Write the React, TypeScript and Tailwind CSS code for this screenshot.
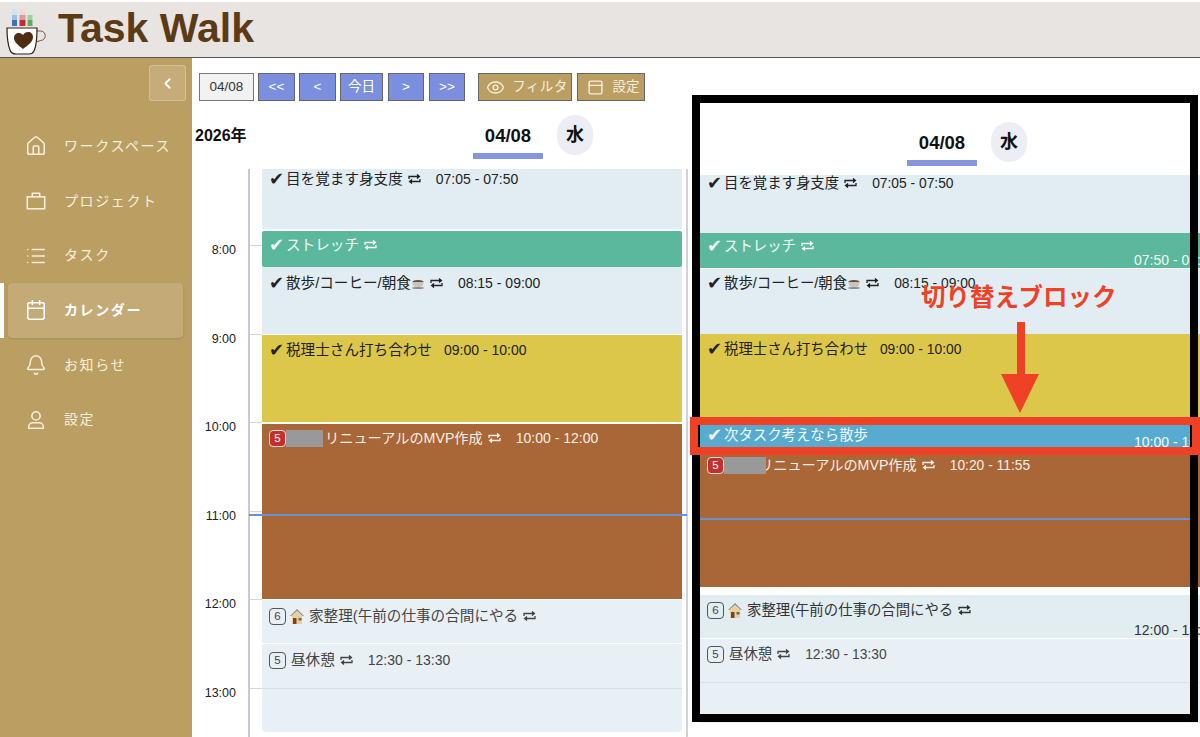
import { Bell, Calendar, ChevronLeft, Eye, House, List, PanelTop } from "lucide-react";
import type { ReactNode } from "react";

const Logo = () => (
  <svg width="50" height="55" viewBox="0 0 50 55" className="shrink-0">
    <rect x="12" y="7" width="5" height="6" fill="#cfe3f2" />
    <rect x="12" y="13" width="5" height="5" fill="#9dbfe0" />
    <rect x="12" y="18" width="5" height="6" fill="#3d72b8" />
    <rect x="19.5" y="7" width="6" height="6" fill="#f2d9d9" />
    <rect x="19.5" y="13" width="6" height="5" fill="#d99a9a" />
    <rect x="19.5" y="18" width="6" height="6" fill="#b92f35" />
    <rect x="27.5" y="7" width="5" height="6" fill="#d9eeda" />
    <rect x="27.5" y="13" width="5" height="5" fill="#a2d0a4" />
    <rect x="27.5" y="18" width="5" height="6" fill="#5cae5e" />
    <path d="M37 29h3.5a4.5 4.5 0 0 1 0 9.5L36 40" fill="none" stroke="#6b5a44" strokeWidth="1" />
    <path d="M7 26h30c0 10-1 19-3 23-1 2-3 3-5 3H16c-3 0-5-1-6-4C8 43 7 35 7 26z" fill="#fff" stroke="#2a2018" strokeWidth="1.2" />
    <path d="M23 47c-5-4-9-7-9-11 0-3 2-5 5-5 2 0 3 1 4 2 1-2 3-3 5-3 3 0 5 2 5 5 0 5-5 8-10 12z" fill="#4d2c12" />
  </svg>
);

const Repeat = () => (
  <svg width="13" height="10" viewBox="0 0 13 10" fill="none" stroke="currentColor" strokeWidth="1.3" className="shrink-0">
    <path d="M1 5V2.5h9" />
    <path d="M9 .6l2.4 1.9L9 4.400" fill="currentColor" />
    <path d="M12 5v2.500H3" />
    <path d="M4 5.600L1.600 7.500 4 9.400" fill="currentColor" />
  </svg>
);

const Cup = () => (
  <svg width="14" height="14" viewBox="0 0 14 14" className="shrink-0">
    <ellipse cx="7" cy="6" rx="5.5" ry="2" fill="#6b4a30" />
    <path d="M1.500 6c0 3 1.500 5 3.500 5h4c2 0 3.500-2 3.500-5z" fill="#c9c4be" />
    <ellipse cx="7" cy="12" rx="6" ry="1" fill="#8f8a85" />
  </svg>
);

const Home = () => (
  <svg width="14" height="17" viewBox="0 0 14 17" className="shrink-0">
    <path d="M7 1L0 8h1.500L7 3l5.500 5H14z" fill="#8a8f94" />
    <path d="M2 8l5-4.500L12 8v8H2z" fill="#f0cf97" />
    <rect x="3" y="10" width="3.500" height="6" fill="#6b4a2c" />
    <rect x="8.500" y="10" width="3" height="2.500" fill="#5a6b78" />
  </svg>
);

const CaseIcon = () => (
  <svg width="22" height="22" viewBox="0 0 24 24" fill="none" stroke="currentColor" strokeWidth="1.700" className="shrink-0">
    <rect x="2.500" y="7.500" width="19" height="13" />
    <path d="M8 7.500V3.500h8v4" />
  </svg>
);

const PersonIcon = () => (
  <svg width="22" height="22" viewBox="0 0 24 24" fill="none" stroke="currentColor" strokeWidth="1.700" className="shrink-0">
    <circle cx="12" cy="7.500" r="4.500" />
    <path d="M4 21v-1.500A4.500 4.500 0 0 1 8.500 15h7a4.500 4.500 0 0 1 4.500 4.500V21z" />
  </svg>
);

const Badge = ({ n, red }: { n: number; red?: boolean }) =>
  red ? (
    <span className="flex h-[17px] w-[17px] shrink-0 items-center justify-center rounded-[4px] border border-[#f3d9d0] bg-[#c5302f] text-[11.500px] text-white">
      {n}
    </span>
  ) : (
    <span className="flex h-[17px] w-[17px] shrink-0 items-center justify-center rounded-[4px] border border-[#555] text-[11.500px] text-[#444]">
      {n}
    </span>
  );

const Check = () => <span className="w-[14px] shrink-0 text-[18px] leading-none">✔</span>;

type Ev = {
  box: string;
  lead: ReactNode;
  title: ReactNode;
  repeat?: boolean;
  time?: string;
  timeMl?: string;
  corner?: string;
  cornerPos?: string;
};

const Event = ({ e }: { e: Ev }) => (
  <div className={`relative overflow-hidden ${e.box}`}>
    <div className="flex h-5 items-center whitespace-nowrap pl-[7px] leading-5">
      {e.lead}
      <span className="flex items-center">{e.title}</span>
      {e.repeat && (
        <span className="ml-[5px]">
          <Repeat />
        </span>
      )}
      {e.time && <span className={`text-[0.96em] ${e.timeMl ?? "ml-[15px]"}`}>{e.time}</span>}
    </div>
    {e.corner && (
      <span className={`absolute left-[434px] whitespace-nowrap text-[14px] leading-4 ${e.cornerPos}`}>{e.corner}</span>
    )}
  </div>
);

const checkLead = (
  <span className="mr-[3px] flex">
    <Check />
  </span>
);
const redLead = (n: number) => (
  <span className="flex">
    <Badge n={n} red />
  </span>
);
const plainLead = (n: number) => (
  <span className="mr-[5px] flex">
    <Badge n={n} />
  </span>
);

const wake = "目を覚ます身支度";
const walk = (
  <>
    散歩/コーヒー/朝食
    <Cup />
  </>
);
const renewalLeft = (
  <>
    <span className="h-[17px] w-[37px] shrink-0 bg-[#999]" />
    <span className="ml-[2px] text-[14.200px]">リニューアルのMVP作成</span>
  </>
);
const renewalRight = (
  <>
    <span className="relative z-10 h-[17px] w-[42px] shrink-0 bg-[#999]" />
    <span className="-ml-[7px] text-[14.200px]">リニューアルのMVP作成</span>
  </>
);
const house = (
  <>
    <span className="mx-[5px] -ml-[1px]">
      <Home />
    </span>
    家整理(午前の仕事の合間にやる
  </>
);

const leftEvents: Ev[] = [
  { box: "h-[60px] bg-[#e2edf3] text-[#222]", lead: checkLead, title: wake, repeat: true, time: "07:05 - 07:50" },
  { box: "mt-[2px] h-[36px] rounded-[2px] bg-[#5bb89d] pt-1 text-[#f2f8f5]", lead: checkLead, title: "ストレッチ", repeat: true },
  { box: "h-[67px] bg-[#e2edf3] pt-[6px] text-[#222]", lead: checkLead, title: walk, repeat: true, time: "08:15 - 09:00" },
  { box: "mt-px h-[87px] bg-[#dcc74a] pt-[5px] text-[#222]", lead: checkLead, title: "税理士さん打ち合わせ", time: "09:00 - 10:00", timeMl: "ml-[12px]" },
  { box: "mt-[2px] h-[175px] bg-[#a96636] pt-1 text-[#f6efe8]", lead: redLead(5), title: renewalLeft, repeat: true, time: "10:00 - 12:00" },
  { box: "mt-px h-[43px] bg-[#e8f0f6] pt-[6px] text-[#444]", lead: plainLead(6), title: house, repeat: true },
  { box: "mt-px h-[45px] border-b border-[#d6dde3] bg-[#e8f0f6] pt-[6px] text-[#444]", lead: plainLead(5), title: "昼休憩", repeat: true, time: "12:30 - 13:30" },
];

const rightEvents: Ev[] = [
  { box: "h-[58px] bg-[#e2edf3] text-[#222] [&>div]:h-4 [&>div]:leading-4", lead: checkLead, title: wake, repeat: true, time: "07:05 - 07:50" },
  { box: "h-[35px] bg-[#5bb89d] pt-[3px] text-[#f2f8f5]", lead: checkLead, title: "ストレッチ", repeat: true, corner: "07:50 - 08:35", cornerPos: "bottom-0" },
  { box: "mt-px h-[65px] bg-[#e2edf3] pt-1 text-[#222]", lead: checkLead, title: walk, repeat: true, time: "08:15 - 09:00" },
  { box: "h-[91px] bg-[#dcc74a] pt-[5px] text-[#222]", lead: checkLead, title: "税理士さん打ち合わせ", time: "09:00 - 10:00", timeMl: "ml-[12px]" },
  { box: "h-[22px] bg-[#57abcf] text-[#f2f8fb]", lead: checkLead, title: "次タスク考えなら散歩", corner: "10:00 - 10:20", cornerPos: "-bottom-[3px]" },
  { box: "h-[140px] bg-[#a96636] pt-2 text-[#f6efe8]", lead: redLead(5), title: renewalRight, repeat: true, time: "10:20 - 11:55" },
  { box: "mt-2 h-[43px] bg-[#e2edf1] pt-[5px] text-[#333]", lead: plainLead(6), title: house, repeat: true, corner: "12:00 - 12:30", cornerPos: "bottom-0" },
  { box: "mt-px h-[44px] border-b border-[#dde3e8] bg-[#e8f0f6] pt-[5px] text-[#444]", lead: plainLead(5), title: "昼休憩", repeat: true, time: "12:30 - 13:30" },
];

const iconProps = { size: 22, strokeWidth: 1.7, className: "shrink-0" };

const navItems: { label: string; icon: ReactNode; active?: boolean }[] = [
  { label: "ワークスペース", icon: <House {...iconProps} /> },
  { label: "プロジェクト", icon: <CaseIcon /> },
  { label: "タスク", icon: <List {...iconProps} /> },
  { label: "カレンダー", icon: <Calendar {...iconProps} />, active: true },
  { label: "お知らせ", icon: <Bell {...iconProps} /> },
  { label: "設定", icon: <PersonIcon /> },
];

const hours = ["8:00", "9:00", "10:00", "11:00", "12:00", "13:00"];

const Sidebar = () => (
  <aside className="flex w-[192px] shrink-0 flex-col bg-[#bb9e62] pt-[7px] text-[#f7eedf]">
    <button className="mr-[6px] flex h-[36px] w-[37px] items-center justify-center self-end rounded-[3px] border border-white/25 bg-white/15">
      <ChevronLeft size={17} strokeWidth={2.5} className="text-white" />
    </button>
    <nav className="mt-[18px] flex flex-col">
      {navItems.map((item) => (
        <div key={item.label} className="flex h-[54.700px]">
          <span className={item.active ? "w-1 bg-white" : "w-1"} />
          <div
            className={
              item.active
                ? "ml-1 flex w-[175px] items-center gap-[17px] rounded-[4px] bg-[#c3aa76] pl-[17px] font-bold text-white shadow-sm"
                : "ml-1 flex w-[175px] items-center gap-[17px] pl-[17px]"
            }
          >
            {item.icon}
            <span className="text-[14px] tracking-[1.600px]">{item.label}</span>
          </div>
        </div>
      ))}
    </nav>
  </aside>
);

const navBtn = "flex h-7 items-center justify-center border border-[#666] bg-[#7b8fde] text-[13.500px] text-white";
const goldBtn = "flex h-7 items-center justify-center border border-[#666] bg-[#bb9e62] pl-1 text-[13.500px] text-[#f7eedf]";

const Toolbar = () => (
  <div className="flex h-[43px] shrink-0 items-start pl-[7px] pt-[15px]">
    <div className="flex h-7 w-[55px] items-center justify-center border border-[#777] bg-[#f2f2f2] text-[13.500px] text-[#333]">04/08</div>
    <button className={`${navBtn} ml-1 w-[37px]`}>&lt;&lt;</button>
    <button className={`${navBtn} ml-1 w-[37px]`}>&lt;</button>
    <button className={`${navBtn} ml-1 w-[43px]`}>今日</button>
    <button className={`${navBtn} ml-[5px] w-[36px]`}>&gt;</button>
    <button className={`${navBtn} ml-[5px] w-[36px]`}>&gt;&gt;</button>
    <button className={`${goldBtn} ml-[13px] w-[94px] gap-[7px]`}>
      <Eye size={19} strokeWidth={1.7} />
      <span className="tracking-[0.500px]">フィルタ</span>
    </button>
    <button className={`${goldBtn} ml-[5px] w-[68px] gap-[9px]`}>
      <PanelTop size={17} strokeWidth={2} />
      <span>設定</span>
    </button>
  </div>
);

const DayHead = () => (
  <>
    <div className="mt-1 flex w-[70px] flex-col items-center">
      <span className="text-[18.500px] font-bold leading-[34px] text-[#111]">04/08</span>
      <span className="h-[6px] w-full bg-[#8496de]" />
    </div>
    <span className="ml-[14px] flex h-10 w-9 items-center justify-center rounded-full bg-[#edeef5] text-[18px] font-bold text-[#111]">水</span>
  </>
);

export default function App() {
  return (
    <div className="relative flex h-[737px] w-[1200px] flex-col overflow-hidden bg-white font-['Liberation_Sans','Noto_Sans_CJK_JP',sans-serif]">
      <header className="mt-[2px] flex h-[56px] shrink-0 items-center border-b border-[#555] bg-[#e8e4e2] pr-4">
        <Logo />
        <h1 className="ml-2 -mt-0.5 text-[41px] font-bold leading-none text-[#5c3a15]">Task Walk</h1>
      </header>

      <div className="flex min-h-0 flex-1">
        <Sidebar />

        <section className="flex w-[496px] shrink-0 flex-col">
          <Toolbar />
          <div className="flex h-[68px] shrink-0 items-start pl-[3px] pt-[14px]">
            <span className="mt-1 w-[278px] text-[16px] font-bold leading-[34px] text-[#111]">2026年</span>
            <DayHead />
          </div>
          <div className="flex min-h-0 flex-1">
            <div className="w-[58px] border-r-2 border-[#c8c9d2] pt-[71px] pr-[12px] text-right text-[12.500px] leading-5 text-[#222]">
              {hours.map((h) => (
                <div key={h} className="h-[88.600px]">{h}</div>
              ))}
            </div>
            <div className="w-[12px] pt-[76px]">
              {hours.map((h) => (
                <div key={h} className="h-[88.600px] border-t border-[#d5d8e0]" />
              ))}
            </div>
            <div className="w-[426px] border-r-2 border-[#d0d1da] pr-[4px] text-[14.600px]">
              {leftEvents.map((e, i) => (
                <Event key={i} e={e} />
              ))}
              <div className="h-[43px] rounded-b-[4px] bg-[#e8f0f6]" />
            </div>
          </div>
        </section>

        <section className="min-w-0 flex-1 overflow-hidden pl-[12px]">
          <div className="flex h-[117px] items-start pl-[207px] pt-[64px]">
            <DayHead />
          </div>
          <div className="w-[500px] text-[14.400px]">
            {rightEvents.map((e, i) => (
              <Event key={i} e={e} />
            ))}
            <div className="h-[40px] bg-[#e8f0f6]" />
          </div>
        </section>
      </div>

      {/* now indicator */}
      <div className="absolute left-[249px] top-[514px] h-[1.500px] w-[438px] bg-[#6e8fd0]" />
      <div className="absolute left-[700px] top-[518px] h-[1.500px] w-[490px] bg-[#6e8fd0]" />

      {/* annotations */}
      <div className="pointer-events-none absolute left-[692px] top-[95px] h-[627px] w-[506px] border-[8px] border-black" />
      <div className="pointer-events-none absolute left-[690px] top-[417px] h-[38px] w-[510px] border-[8px] border-[#ee4125]" />
      <span className="absolute left-[921px] top-[283px] whitespace-nowrap text-[24.500px] font-bold leading-[30px] text-[#ee4125]">切り替えブロック</span>
      <svg width="38" height="91" viewBox="0 0 38 91" className="absolute left-[1001px] top-[322px]">
        <rect x="16" y="0" width="8" height="53" fill="#ee4125" />
        <path d="M0 52h38L19 91z" fill="#ee4125" />
      </svg>
    </div>
  );
}
